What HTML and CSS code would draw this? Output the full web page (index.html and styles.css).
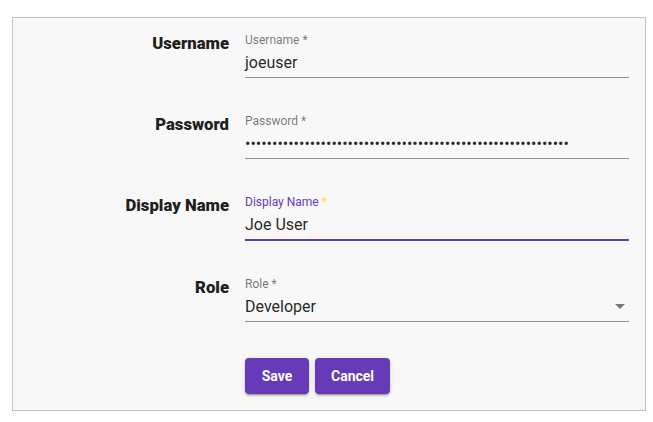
FILE: index.html
```html
<!DOCTYPE html>
<html lang="en">
<head>
<meta charset="utf-8">
<title>User form</title>
<link rel="stylesheet" href="styles.css">
</head>
<body>
<form class="card">
  <div class="form-grid">
    <div class="row-label">Username</div>
    <div class="field">
      <div class="field-label">Username *</div>
      <div class="field-input">joeuser</div>
    </div>

    <div class="row-label">Password</div>
    <div class="field">
      <div class="field-label">Password *</div>
      <div class="field-input password">••••••••••••••••••••••••••••••••••••••••••••••••••••••••••••</div>
    </div>

    <div class="row-label">Display Name</div>
    <div class="field focused">
      <div class="field-label">Display Name <span class="req">*</span></div>
      <div class="field-input">Joe User</div>
    </div>

    <div class="row-label">Role</div>
    <div class="field">
      <div class="field-label">Role *</div>
      <div class="field-input select">
        <span>Developer</span>
        <svg class="arrow" width="10" height="5" viewBox="0 0 10 5"><path d="M0 0L5 5L10 0Z"/></svg>
      </div>
    </div>

    <div class="spacer"></div>
    <div class="actions">
      <button type="button" class="btn">Save</button>
      <button type="button" class="btn">Cancel</button>
    </div>
  </div>
</form>
</body>
</html>
```

FILE: styles.css
```css
html, body {
  margin: 0;
  padding: 0;
  background: #ffffff;
}

body {
  font-family: Roboto, "Liberation Sans", Arial, sans-serif;
  color: rgba(0, 0, 0, 0.87);
}

.card {
  box-sizing: border-box;
  width: 634px;
  margin: 17px 0 0 12px;
  padding: 15px 16px 16px 0;
  background: #f8f8f8;
  border: 1px solid #c2c2c2;
}

.form-grid {
  display: grid;
  grid-template-columns: 216px 384px;
  column-gap: 16px;
  row-gap: 36px;
}

.row-label {
  padding-top: 1px;
  font-size: 16.7px;
  line-height: 19px;
  font-weight: 900;
  text-align: right;
  color: #1f1f1f;
}

.field {
  display: flex;
  flex-direction: column;
}

.field-label {
  font-size: 12px;
  line-height: 14px;
  height: 14px;
  color: rgba(0, 0, 0, 0.54);
}

.field-input {
  margin-top: 6px;
  font-size: 16px;
  line-height: 19px;
  padding-bottom: 5px;
  border-bottom: 1px solid #8f8f8f;
  color: rgba(0, 0, 0, 0.87);
}

.field-input.password {
  overflow: hidden;
  white-space: nowrap;
}

.field.focused .field-label {
  color: #673ab7;
}

.field.focused .req {
  color: #fdd835;
}

.field.focused .field-input {
  border-bottom: 2px solid #673ab7;
}

.field-input.select {
  display: flex;
  justify-content: space-between;
  align-items: flex-start;
}

.arrow {
  margin-top: 7px;
  margin-right: 4px;
  fill: #757575;
}

.spacer {
  height: 0;
}

.actions {
  display: flex;
  gap: 6px;
}

.btn {
  box-sizing: border-box;
  height: 36px;
  min-width: 64px;
  padding: 0 16px;
  border: none;
  border-radius: 4px;
  background: #673ab7;
  color: #ffffff;
  font-family: Roboto, "Liberation Sans", Arial, sans-serif;
  font-size: 14px;
  font-weight: 700;
  box-shadow: 0 3px 1px -2px rgba(0, 0, 0, 0.2), 0 2px 2px 0 rgba(0, 0, 0, 0.14), 0 1px 5px 0 rgba(0, 0, 0, 0.12);
}
```
